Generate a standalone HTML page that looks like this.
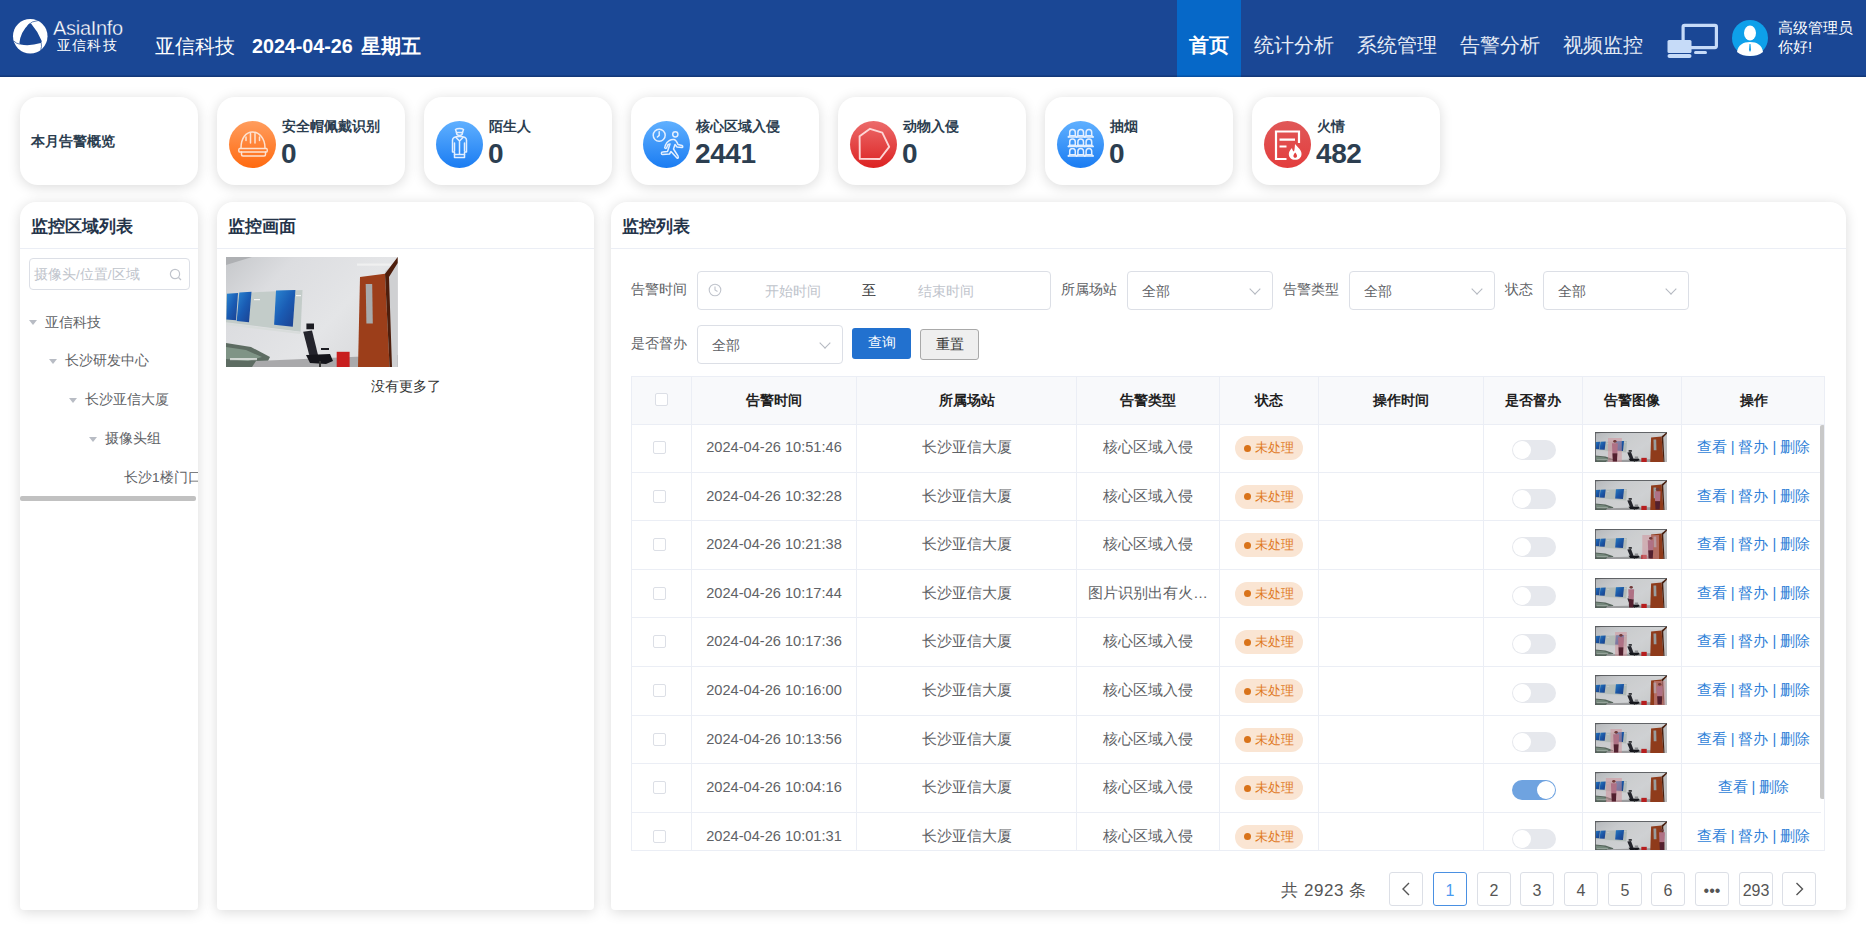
<!DOCTYPE html>
<html><head><meta charset="utf-8">
<style>
*{margin:0;padding:0;box-sizing:border-box;}
html,body{width:1866px;height:930px;overflow:hidden;background:#fff;font-family:"Liberation Sans",sans-serif;}
.abs{position:absolute;}
#hdr{position:absolute;left:0;top:0;width:1866px;height:77px;background:#1a4795;color:#fff;box-shadow:inset 0 -1.5px 0 rgba(10,30,70,0.35);}
.nav{position:absolute;top:0;height:77px;line-height:90px;font-size:20px;color:#e6ecf5;white-space:nowrap;}
.card{position:absolute;background:#fff;border-radius:18px;box-shadow:0 2px 13px rgba(0,0,0,0.15);}
.stat{top:97px;height:88px;width:188px;}
.stat .ic{position:absolute;left:12px;top:24px;width:47px;height:47px;border-radius:50%;}
.stat .ic svg{position:absolute;left:0;top:0;}
.stat .t{position:absolute;left:65px;top:21px;font-size:13.7px;font-weight:bold;color:#2c3e50;white-space:nowrap;}
.stat .n{position:absolute;left:64px;top:41px;font-size:28px;letter-spacing:-0.4px;font-weight:bold;color:#2c3e50;}
.panel{top:202px;height:708px;border-radius:16px 16px 4px 4px;}
.ptitle{position:absolute;left:11px;top:13px;font-size:17px;font-weight:bold;color:#25344a;white-space:nowrap;}
.pline{position:absolute;left:0;right:0;top:46px;height:1px;background:#ebeef5;}
.lbl{position:absolute;font-size:13.7px;color:#606266;white-space:nowrap;}
.inp{position:absolute;border:1px solid #dcdfe6;border-radius:4px;background:#fff;height:38.5px;}
.sel{width:146px;}
.sel .v{position:absolute;left:14px;top:11px;font-size:14px;color:#606266;}
.sel .arr{position:absolute;right:13px;top:13px;width:8px;height:8px;border-right:1px solid #b4b8c0;border-bottom:1px solid #b4b8c0;transform:rotate(45deg);}
.tree{position:absolute;font-size:13.7px;color:#606266;white-space:nowrap;}
.tri{position:absolute;width:0;height:0;border-left:4px solid transparent;border-right:4px solid transparent;border-top:5px solid #b8bcc4;}
#tbl{position:absolute;left:631px;top:376px;width:1194px;height:475px;border:1px solid #ebeef5;overflow:hidden;}
.th{position:absolute;top:0;height:48px;line-height:46px;text-align:center;font-size:14px;font-weight:bold;color:#1f1f1f;background:#f8f9fb;border-right:1px solid #ebeef5;border-bottom:1px solid #ebeef5;}
.row{position:absolute;left:0;width:1189px;height:48.6px;border-bottom:1px solid #ebeef5;}
.td{position:absolute;top:0;height:100%;text-align:center;font-size:14.6px;color:#606266;border-right:1px solid #ebeef5;line-height:47px;white-space:nowrap;}
.cb{position:absolute;width:13px;height:13px;border:1px solid #dcdfe6;border-radius:2px;background:#fff;}
.tag{position:absolute;left:15px;top:12px;width:68px;height:24px;border-radius:12px;background:#fae5d3;color:#e07a1f;font-size:13px;line-height:24px;text-align:left;padding-left:20px;}
.tag:before{content:"";position:absolute;left:9px;top:8.5px;width:7px;height:7px;border-radius:50%;background:#d9731a;}
.sw{position:absolute;left:28px;top:16px;width:44px;height:20px;border-radius:10px;background:#e6e8ed;}
.sw:after{content:"";position:absolute;left:1px;top:1px;width:18px;height:18px;border-radius:50%;background:#fff;}
.sw.on{background:#6fa3e0;}
.sw.on:after{left:25px;}
.th img,.td .im{position:absolute;}
.im{left:12px;top:7.8px;width:72px;height:30px;}
.ops{color:#2f7fd8;font-size:14.6px;}
.pg{position:absolute;top:872px;width:34px;height:34px;border:1px solid #dcdfe6;border-radius:3px;background:#fff;text-align:center;line-height:35px;font-size:16px;color:#555;}
</style></head>
<body>
<svg width="0" height="0" style="position:absolute">
<defs>
<linearGradient id="wallg" x1="0" y1="0" x2="1" y2="0.6"><stop offset="0" stop-color="#c6c8cb"/><stop offset="0.3" stop-color="#dcdde0"/><stop offset="0.7" stop-color="#e4e5e7"/><stop offset="1" stop-color="#dadbdd"/></linearGradient>
<linearGradient id="postg" x1="0" y1="0" x2="1" y2="1"><stop offset="0" stop-color="#2a86d2"/><stop offset="0.5" stop-color="#1a5cb4"/><stop offset="1" stop-color="#1b3f8f"/></linearGradient>
<g id="camg">
<rect width="172" height="110" fill="url(#wallg)"/>
<polygon points="0,0 26,0 0,8" fill="#aeb0b3"/>
<polygon points="0,36.8 76.5,32.9 74.6,74.8 0,65.2" fill="#c3ccc9"/>
<polygon points="0,66 74.6,75 74,77 0,68" fill="#d8dcdb"/>
<polygon points="1,36.8 12,36.1 10,63.2 0.4,62.6" fill="url(#postg)"/>
<polygon points="13.3,35.5 25.5,34.8 23,65.2 10.7,63.9" fill="url(#postg)"/>
<polygon points="50,33.5 69.4,32.9 66.8,69.7 48.1,67.7" fill="url(#postg)"/>
<rect x="28" y="42" width="6" height="1.2" fill="#f4f4f4"/><rect x="70" y="38" width="5" height="1.2" fill="#f4f4f4"/>
<polygon points="0,86 25,90 44,100 42,104 30,110 0,110" fill="#5d6c62"/>
<polygon points="0,90 20,93 36,100 22,104 0,102" fill="#7f9486"/>
<polygon points="30,104 172,98 172,110 26,110" fill="#a9a9ab"/>
<polygon points="80.4,66.5 88,66.5 88,72.3 80.4,72.3" fill="#1c1c22"/>
<polygon points="77.2,74.8 86,73.5 92,98 84,101" fill="#24242c"/>
<polygon points="80,98 104,97 107,104 100,107 84,106" fill="#15151b"/>
<rect x="95" y="91" width="8" height="2" fill="#1c1c22"/><rect x="93" y="104" width="2" height="6" fill="#333"/>
<rect x="110.7" y="94.8" width="12.9" height="15.5" fill="#c81e1e"/>
<polygon points="159,14.2 171.7,4 171.7,110.3 163.6,110.3" fill="#cfd0d2"/>
<polygon points="134,20 159,16.8 163.6,110.3 132,110.3" fill="#9c3e1a"/>
<polygon points="139.7,27.1 146.2,27.1 146.8,66.5 140.4,66.5" fill="#a8aaab"/>
<polygon points="159,16.8 171.7,0 171.7,6 163,20 166,110.3 163.6,110.3" fill="#4e1e0c"/>
<rect x="131" y="6.5" width="34" height="2.2" fill="#f2f2f2" opacity="0.8"/>
<rect x="4" y="101" width="27" height="2.2" fill="#f2f2f2" opacity="0.7"/>
</g></defs></svg><div id="hdr">
  <svg class="abs" style="left:12px;top:18px" width="36" height="36" viewBox="0 0 36 36">
    <circle cx="18.25" cy="18.2" r="17.25" fill="#fff"/>
    <path d="M17.2,5.8 Q18.2,5 19.2,5.8 Q25.5,13 29.6,22.8 Q30.2,24.6 28.8,25 Q18.5,28.2 8.6,26.6 Q7.4,26.3 7.4,25 Q8.5,14 17.2,5.8 Z" fill="#1a4795"/>
    <path d="M15.5,7.5 Q20,2.8 26,2.6 M7.8,26.2 Q4,25.5 1.8,23 M29.2,24.8 Q30,28.5 28.8,31.8" fill="none" stroke="#1a4795" stroke-width="0.7"/>
  </svg>
  <div class="abs" style="left:53px;top:17px;font-size:20px;color:#fff;letter-spacing:-0.3px;-webkit-text-stroke:0.35px #1a4795">AsiaInfo</div>
  <div class="abs" style="left:57px;top:37px;font-size:14px;color:#fff;letter-spacing:1.2px;">亚信科技</div>
  <div class="abs" style="left:155px;top:33px;font-size:20px;color:#fff;">亚信科技</div>
  <div class="abs" style="left:252px;top:35px;font-size:19.7px;font-weight:bold;color:#fff;white-space:nowrap">2024-04-26</div><div class="abs" style="left:361px;top:33px;font-size:19.5px;font-weight:bold;color:#fff;white-space:nowrap">星期五</div>
  <div class="abs" style="left:1177px;top:0;width:64px;height:77px;background:#0668c8;box-shadow:inset 0 -1.5px 0 rgba(10,40,100,0.35);"></div>
  <div class="nav" style="left:1189px;font-weight:bold;color:#fff">首页</div>
  <div class="nav" style="left:1254px">统计分析</div>
  <div class="nav" style="left:1357px">系统管理</div>
  <div class="nav" style="left:1460px">告警分析</div>
  <div class="nav" style="left:1563px">视频监控</div>
  <svg class="abs" style="left:1666px;top:20px" width="56" height="42" viewBox="0 0 56 42">
    <rect x="17.1" y="5.4" width="33.3" height="22.2" rx="1.5" fill="none" stroke="#c6dbf8" stroke-width="3.2"/>
    <rect x="28" y="31" width="13" height="3" rx="1.5" fill="#c6dbf8"/>
    <rect x="1.5" y="20" width="24" height="13" rx="1.5" fill="#c6dbf8" stroke="#1a4795" stroke-width="0"/>
    <rect x="1.5" y="34" width="24" height="4" rx="2" fill="#c6dbf8"/>
  </svg>
  <svg class="abs" style="left:1731px;top:19px" width="38" height="38" viewBox="0 0 38 38">
    <circle cx="19" cy="19" r="18" fill="#0ea0ea"/>
    <ellipse cx="19" cy="14" rx="6" ry="7.5" fill="#fff"/>
    <path d="M6,33 C7,26 12,23 19,23 C26,23 31,26 32,33 C28,36 24,37 19,37 C14,37 10,36 6,33Z" fill="#fff"/>
    <path d="M18.5,25 L19.5,25 L20,31 L19,33 L18,31Z" fill="#0ea0ea"/>
  </svg>
  <div class="abs" style="left:1778px;top:18px;font-size:15px;line-height:19px;color:#fff;white-space:nowrap">高级管理员<br>你好!</div>
</div>
<div class="card stat" style="left:20px;width:178px"><div class="abs" style="left:11px;top:36px;font-size:14px;font-weight:bold;color:#2c3e50">本月告警概览</div></div>
<div class="card stat" style="left:217px"><div class="ic" style="background:linear-gradient(#ff9d5e,#ff6a10)"><svg width="47" height="47" viewBox="0 0 47 47"><path d="M12,27 C12,17 17,11 23.5,11 C30,11 36,17 36,27" stroke="#fde3d2" fill="none" stroke-width="1.5" stroke-linejoin="round" stroke-linecap="round"/><path d="M10.5,27.5 L37.5,27.5 C38.5,27.5 38.5,31 37.5,31 L10.5,31 C9.5,31 9.5,27.5 10.5,27.5 Z" stroke="#fde3d2" fill="none" stroke-width="1.5" stroke-linejoin="round" stroke-linecap="round"/><path d="M12.5,31 L12.5,33.5 C12.5,34.5 13,35 14,35 L35,35 C36,35 36.5,34.5 36.5,33.5 L36.5,31" stroke="#fde3d2" fill="none" stroke-width="1.5" stroke-linejoin="round" stroke-linecap="round"/><path d="M21.5,12.5 L21.5,22 M26,12.5 L26,22 M17,16 L17,19.5 M30.5,16 L30.5,19.5" stroke="#fde3d2" fill="none" stroke-width="1.5" stroke-linejoin="round" stroke-linecap="round"/></svg></div><div class="t">安全帽佩戴识别</div><div class="n">0</div></div>
<div class="card stat" style="left:424px"><div class="ic" style="background:linear-gradient(#60b0ff,#1a7cf2)"><svg width="47" height="47" viewBox="0 0 47 47"><path d="M19.5,8.5 C21,7 26,7 27.5,8.5 L26.5,11.5 L20.5,11.5 Z" stroke="#e3efff" fill="none" stroke-width="1.5" stroke-linejoin="round" stroke-linecap="round"/><path d="M20.5,11.5 C20.5,15.5 26.5,15.5 26.5,11.5" stroke="#e3efff" fill="none" stroke-width="1.5" stroke-linejoin="round" stroke-linecap="round"/><path d="M16.5,31 L16.5,19 C16.5,16.5 19,15.5 23.5,15.5 C28,15.5 30.5,16.5 30.5,19 L30.5,31 L28.5,31 L28.5,36.5 L18.5,36.5 L18.5,31 Z" stroke="#e3efff" fill="none" stroke-width="1.5" stroke-linejoin="round" stroke-linecap="round"/><path d="M20,16.5 L23.5,20 L27,16.5 M23.5,20 L23.5,33 M18.5,22 L18.5,30 M28.5,22 L28.5,30 M18.5,33.5 L28.5,33.5" stroke="#e3efff" fill="none" stroke-width="1.5" stroke-linejoin="round" stroke-linecap="round"/></svg></div><div class="t">陌生人</div><div class="n">0</div></div>
<div class="card stat" style="left:631px"><div class="ic" style="background:linear-gradient(#60b0ff,#1a7cf2)"><svg width="47" height="47" viewBox="0 0 47 47"><circle cx="16.2" cy="14.2" r="6" stroke="#e3efff" fill="none" stroke-width="1.5" stroke-linejoin="round" stroke-linecap="round"/><path d="M16.2,10.8 L16.2,14.4 L14.4,16" stroke="#e3efff" fill="none" stroke-width="1.5" stroke-linejoin="round" stroke-linecap="round"/><circle cx="32.3" cy="13.3" r="2.6" stroke="#e3efff" fill="none" stroke-width="1.5" stroke-linejoin="round" stroke-linecap="round"/><path d="M22.5,24 C24,20 28,18 31,18.5 C33,19 34,21 35,23.5 L39,24.5 C40,25 40,26.5 39,26.5 L34,26 L32,23.5 L30.5,28 L35,35 C36,37 34.5,38 33.5,36.5 L28,30.5 L26.5,33 L19.5,33.5 C18,33.5 18,31 19.5,31 L24.5,30.5 L27,23 L25,23.5 L23.5,27 C22.5,28 21,27 22,25.5 Z" stroke="#e3efff" fill="none" stroke-width="1.5" stroke-linejoin="round" stroke-linecap="round"/></svg></div><div class="t">核心区域入侵</div><div class="n">2441</div></div>
<div class="card stat" style="left:838px"><div class="ic" style="background:linear-gradient(#ec6b6b,#dc2222)"><svg width="47" height="47" viewBox="0 0 47 47"><polygon points="9.6,15.3 20,7.8 32.3,11.7 39.2,25.8 29.9,38 9.8,37.9" fill="none" stroke="#fdd6d6" stroke-width="1.9" stroke-linejoin="round"/></svg></div><div class="t">动物入侵</div><div class="n">0</div></div>
<div class="card stat" style="left:1045px"><div class="ic" style="background:linear-gradient(#60b0ff,#1a7cf2)"><svg width="47" height="47" viewBox="0 0 47 47"><path d="M15.5,8.5 c-2.2,0 -2.8,1.6 -2.8,3 l0,3.2 l5.6,0 l0,-3.2 c0,-1.4 -0.6,-3 -2.8,-3 Z" stroke="#e3efff" fill="none" stroke-width="1.5" stroke-linejoin="round" stroke-linecap="round"/><path d="M12.7,14.7 l-1.4,1.2 M18.3,14.7 l1.4,1.2" stroke="#e3efff" fill="none" stroke-width="1.5" stroke-linejoin="round" stroke-linecap="round"/><path d="M23.7,8.5 c-2.2,0 -2.8,1.6 -2.8,3 l0,3.2 l5.6,0 l0,-3.2 c0,-1.4 -0.6,-3 -2.8,-3 Z" stroke="#e3efff" fill="none" stroke-width="1.5" stroke-linejoin="round" stroke-linecap="round"/><path d="M20.9,14.7 l-1.4,1.2 M26.5,14.7 l1.4,1.2" stroke="#e3efff" fill="none" stroke-width="1.5" stroke-linejoin="round" stroke-linecap="round"/><path d="M31.9,8.5 c-2.2,0 -2.8,1.6 -2.8,3 l0,3.2 l5.6,0 l0,-3.2 c0,-1.4 -0.6,-3 -2.8,-3 Z" stroke="#e3efff" fill="none" stroke-width="1.5" stroke-linejoin="round" stroke-linecap="round"/><path d="M29.1,14.7 l-1.4,1.2 M34.7,14.7 l1.4,1.2" stroke="#e3efff" fill="none" stroke-width="1.5" stroke-linejoin="round" stroke-linecap="round"/><path d="M11.5,15.9 L36,15.9" stroke="#e3efff" fill="none" stroke-width="1.5" stroke-linejoin="round" stroke-linecap="round"/><path d="M15.5,18 c-2.2,0 -2.8,1.6 -2.8,3 l0,3.2 l5.6,0 l0,-3.2 c0,-1.4 -0.6,-3 -2.8,-3 Z" stroke="#e3efff" fill="none" stroke-width="1.5" stroke-linejoin="round" stroke-linecap="round"/><path d="M12.7,24.2 l-1.4,1.2 M18.3,24.2 l1.4,1.2" stroke="#e3efff" fill="none" stroke-width="1.5" stroke-linejoin="round" stroke-linecap="round"/><path d="M23.7,18 c-2.2,0 -2.8,1.6 -2.8,3 l0,3.2 l5.6,0 l0,-3.2 c0,-1.4 -0.6,-3 -2.8,-3 Z" stroke="#e3efff" fill="none" stroke-width="1.5" stroke-linejoin="round" stroke-linecap="round"/><path d="M20.9,24.2 l-1.4,1.2 M26.5,24.2 l1.4,1.2" stroke="#e3efff" fill="none" stroke-width="1.5" stroke-linejoin="round" stroke-linecap="round"/><path d="M31.9,18 c-2.2,0 -2.8,1.6 -2.8,3 l0,3.2 l5.6,0 l0,-3.2 c0,-1.4 -0.6,-3 -2.8,-3 Z" stroke="#e3efff" fill="none" stroke-width="1.5" stroke-linejoin="round" stroke-linecap="round"/><path d="M29.1,24.2 l-1.4,1.2 M34.7,24.2 l1.4,1.2" stroke="#e3efff" fill="none" stroke-width="1.5" stroke-linejoin="round" stroke-linecap="round"/><path d="M11.5,25.4 L36,25.4" stroke="#e3efff" fill="none" stroke-width="1.5" stroke-linejoin="round" stroke-linecap="round"/><path d="M15.5,27.5 c-2.2,0 -2.8,1.6 -2.8,3 l0,3.2 l5.6,0 l0,-3.2 c0,-1.4 -0.6,-3 -2.8,-3 Z" stroke="#e3efff" fill="none" stroke-width="1.5" stroke-linejoin="round" stroke-linecap="round"/><path d="M12.7,33.7 l-1.4,1.2 M18.3,33.7 l1.4,1.2" stroke="#e3efff" fill="none" stroke-width="1.5" stroke-linejoin="round" stroke-linecap="round"/><path d="M23.7,27.5 c-2.2,0 -2.8,1.6 -2.8,3 l0,3.2 l5.6,0 l0,-3.2 c0,-1.4 -0.6,-3 -2.8,-3 Z" stroke="#e3efff" fill="none" stroke-width="1.5" stroke-linejoin="round" stroke-linecap="round"/><path d="M20.9,33.7 l-1.4,1.2 M26.5,33.7 l1.4,1.2" stroke="#e3efff" fill="none" stroke-width="1.5" stroke-linejoin="round" stroke-linecap="round"/><path d="M31.9,27.5 c-2.2,0 -2.8,1.6 -2.8,3 l0,3.2 l5.6,0 l0,-3.2 c0,-1.4 -0.6,-3 -2.8,-3 Z" stroke="#e3efff" fill="none" stroke-width="1.5" stroke-linejoin="round" stroke-linecap="round"/><path d="M29.1,33.7 l-1.4,1.2 M34.7,33.7 l1.4,1.2" stroke="#e3efff" fill="none" stroke-width="1.5" stroke-linejoin="round" stroke-linecap="round"/><path d="M11.5,34.9 L36,34.9" stroke="#e3efff" fill="none" stroke-width="1.5" stroke-linejoin="round" stroke-linecap="round"/></svg></div><div class="t">抽烟</div><div class="n">0</div></div>
<div class="card stat" style="left:1252px"><div class="ic" style="background:linear-gradient(#e05858,#e33d3d)"><svg width="47" height="47" viewBox="0 0 47 47"><path d="M35,22 L35,10.5 L12,10.5 L12,38 L22.5,38" fill="none" stroke="#fff" stroke-width="2.2"/><path d="M15.5,18.7 L31,18.7 M15.5,25.5 L22.5,25.5" stroke="#fff" stroke-width="2.2"/><path d="M31,23 C34,26.5 37.5,29 37.5,33 C37.5,36.5 35,38.8 31.2,38.8 C27.4,38.8 24.8,36.5 24.8,33 C24.8,30.5 26.5,28.5 28,27 C28.3,29 28.8,30 30,30.5 C30.8,28 30.8,25.5 31,23 Z" fill="#fff"/><path d="M31.2,31.5 C32.5,33 33,34 33,35 C33,36.2 32.2,36.8 31.2,36.8 C30.2,36.8 29.4,36.2 29.4,35 C29.4,34 30,33 31.2,31.5 Z" fill="#e04040"/></svg></div><div class="t">火情</div><div class="n">482</div></div>
<div class="card panel" style="left:20px;width:178px;overflow:hidden">
  <div class="ptitle">监控区域列表</div><div class="pline"></div>
  <div class="inp" style="left:9px;top:56px;width:161px;height:32px;"><div class="abs" style="left:4px;top:7px;font-size:13.5px;color:#c0c4cc;white-space:nowrap">摄像头/位置/区域</div>
    <svg class="abs" style="left:139px;top:9px" width="14" height="14" viewBox="0 0 14 14"><circle cx="6" cy="6" r="4.6" fill="none" stroke="#c0c4cc" stroke-width="1.2"/><path d="M9.5,9.5 L12,12" stroke="#c0c4cc" stroke-width="1.2"/></svg></div>
  <div class="tri" style="left:9px;top:118px"></div><div class="tree" style="left:25px;top:112px">亚信科技</div>
  <div class="tri" style="left:29px;top:157px"></div><div class="tree" style="left:45px;top:150px">长沙研发中心</div>
  <div class="tri" style="left:49px;top:196px"></div><div class="tree" style="left:65px;top:189px">长沙亚信大厦</div>
  <div class="tri" style="left:69px;top:235px"></div><div class="tree" style="left:85px;top:228px">摄像头组</div>
  <div class="tree" style="left:104px;top:267px">长沙1楼门口</div>
  <div class="abs" style="left:0;top:294px;width:176px;height:5px;background:#c1c1c1;border-radius:2px"></div>
</div>
<div class="card panel" style="left:217px;width:377px">
  <div class="ptitle">监控画面</div><div class="pline"></div>
  <div class="abs" style="left:9px;top:55px;width:172px;height:110px"><svg viewBox="0 0 172 110" preserveAspectRatio="none" width="100%" height="100%" style="display:block"><use href="#camg"/></svg></div>
  <div class="abs" style="left:154px;top:176px;font-size:14px;color:#333;white-space:nowrap">没有更多了</div>
</div>
<div class="card panel" style="left:611px;width:1235px">
  <div class="ptitle">监控列表</div><div class="pline"></div>
</div>
<div class="lbl" style="left:631px;top:281px">告警时间</div>
<div class="inp" style="left:697px;top:271px;width:354px;">
  <svg class="abs" style="left:10px;top:11px" width="14" height="14" viewBox="0 0 14 14"><circle cx="7" cy="7" r="5.8" fill="none" stroke="#c0c4cc" stroke-width="1.1"/><path d="M7,3.5 L7,7 L9.5,8.5" fill="none" stroke="#c0c4cc" stroke-width="1.1"/></svg>
  <div class="abs" style="left:67px;top:10.5px;font-size:13.5px;color:#c0c4cc">开始时间</div>
  <div class="abs" style="left:164px;top:10px;font-size:14px;color:#303133">至</div>
  <div class="abs" style="left:220px;top:10.5px;font-size:13.5px;color:#c0c4cc">结束时间</div>
</div>
<div class="lbl" style="left:1061px;top:281px">所属场站</div>
<div class="inp sel" style="left:1127px;top:271px"><div class="v">全部</div><div class="arr"></div></div>
<div class="lbl" style="left:1283px;top:281px">告警类型</div>
<div class="inp sel" style="left:1349px;top:271px"><div class="v">全部</div><div class="arr"></div></div>
<div class="lbl" style="left:1505px;top:281px">状态</div>
<div class="inp sel" style="left:1543px;top:271px"><div class="v">全部</div><div class="arr"></div></div>
<div class="lbl" style="left:631px;top:335px">是否督办</div>
<div class="inp sel" style="left:697px;top:325px"><div class="v">全部</div><div class="arr"></div></div>
<div class="abs" style="left:852px;top:328px;width:59px;height:31px;background:#2271cf;border-radius:3px;color:#fff;font-size:14px;text-align:center;line-height:29px">查询</div>
<div class="abs" style="left:920px;top:329px;width:59px;height:31px;background:#efefef;border:1px solid #a9a9a9;border-radius:3px;color:#333;font-size:14px;text-align:center;line-height:29px">重置</div>
<div id="tbl">
<div class="th" style="left:0px;width:60px;"><div class="cb" style="left:23px;top:16px"></div></div><div class="th" style="left:60px;width:165px;">告警时间</div><div class="th" style="left:225px;width:220px;">所属场站</div><div class="th" style="left:445px;width:143px;">告警类型</div><div class="th" style="left:588px;width:99px;">状态</div><div class="th" style="left:687px;width:165px;">操作时间</div><div class="th" style="left:852px;width:99px;">是否督办</div><div class="th" style="left:951px;width:99px;">告警图像</div><div class="th" style="left:1050px;width:144px;border-right:none;">操作</div>
<div class="row" style="top:47.00px"><div class="td" style="left:0px;width:60px;"><div class="cb" style="left:21px;top:17px"></div></div><div class="td" style="left:60px;width:165px;">2024-04-26 10:51:46</div><div class="td" style="left:225px;width:220px;">长沙亚信大厦</div><div class="td" style="left:445px;width:143px;">核心区域入侵</div><div class="td" style="left:588px;width:99px;"><div class="tag">未处理</div></div><div class="td" style="left:687px;width:165px;"></div><div class="td" style="left:852px;width:99px;"><div class="sw"></div></div><div class="td" style="left:951px;width:99px;"><div class="abs im"><svg viewBox="0 0 172 110" preserveAspectRatio="none" width="100%" height="100%" style="display:block"><use href="#camg"/><rect x="31" y="22" width="33" height="88" fill="#e6a0aa" opacity="0.55"/><ellipse cx="47.5" cy="34" rx="4" ry="5" fill="#7a3a3a"/><polygon points="40.5,41 54.5,41 53.5,78 41.5,78" fill="#c07a90"/><polygon points="41.5,78 53.5,78 52.5,108 42.5,108" fill="#5a2030"/><rect width="172" height="110" fill="#202428" opacity="0.1"/><rect width="172" height="3" fill="#4a4c50"/><rect width="2" height="110" fill="#5a5c60"/></svg></div></div><div class="td" style="left:1050px;width:139px;border-right:none;"><span class="ops" style="padding-left:4px">查看 | 督办 | 删除</span></div></div>
<div class="row" style="top:95.60px"><div class="td" style="left:0px;width:60px;"><div class="cb" style="left:21px;top:17px"></div></div><div class="td" style="left:60px;width:165px;">2024-04-26 10:32:28</div><div class="td" style="left:225px;width:220px;">长沙亚信大厦</div><div class="td" style="left:445px;width:143px;">核心区域入侵</div><div class="td" style="left:588px;width:99px;"><div class="tag">未处理</div></div><div class="td" style="left:687px;width:165px;"></div><div class="td" style="left:852px;width:99px;"><div class="sw"></div></div><div class="td" style="left:951px;width:99px;"><div class="abs im"><svg viewBox="0 0 172 110" preserveAspectRatio="none" width="100%" height="100%" style="display:block"><use href="#camg"/><ellipse cx="149.5" cy="34" rx="4" ry="5" fill="#7a3a3a"/><polygon points="142.5,41 156.5,41 155.5,78 143.5,78" fill="#c07a90"/><polygon points="143.5,78 155.5,78 154.5,108 144.5,108" fill="#5a2030"/><rect width="172" height="110" fill="#202428" opacity="0.1"/><rect width="172" height="3" fill="#4a4c50"/><rect width="2" height="110" fill="#5a5c60"/></svg></div></div><div class="td" style="left:1050px;width:139px;border-right:none;"><span class="ops" style="padding-left:4px">查看 | 督办 | 删除</span></div></div>
<div class="row" style="top:144.20px"><div class="td" style="left:0px;width:60px;"><div class="cb" style="left:21px;top:17px"></div></div><div class="td" style="left:60px;width:165px;">2024-04-26 10:21:38</div><div class="td" style="left:225px;width:220px;">长沙亚信大厦</div><div class="td" style="left:445px;width:143px;">核心区域入侵</div><div class="td" style="left:588px;width:99px;"><div class="tag">未处理</div></div><div class="td" style="left:687px;width:165px;"></div><div class="td" style="left:852px;width:99px;"><div class="sw"></div></div><div class="td" style="left:951px;width:99px;"><div class="abs im"><svg viewBox="0 0 172 110" preserveAspectRatio="none" width="100%" height="100%" style="display:block"><use href="#camg"/><rect x="113" y="22" width="40" height="88" fill="#e6a0aa" opacity="0.55"/><ellipse cx="133.0" cy="34" rx="4" ry="5" fill="#7a3a3a"/><polygon points="126.0,41 140.0,41 139.0,78 127.0,78" fill="#c07a90"/><polygon points="127.0,78 139.0,78 138.0,108 128.0,108" fill="#5a2030"/><rect width="172" height="110" fill="#202428" opacity="0.1"/><rect width="172" height="3" fill="#4a4c50"/><rect width="2" height="110" fill="#5a5c60"/></svg></div></div><div class="td" style="left:1050px;width:139px;border-right:none;"><span class="ops" style="padding-left:4px">查看 | 督办 | 删除</span></div></div>
<div class="row" style="top:192.80px"><div class="td" style="left:0px;width:60px;"><div class="cb" style="left:21px;top:17px"></div></div><div class="td" style="left:60px;width:165px;">2024-04-26 10:17:44</div><div class="td" style="left:225px;width:220px;">长沙亚信大厦</div><div class="td" style="left:445px;width:143px;">图片识别出有火…</div><div class="td" style="left:588px;width:99px;"><div class="tag">未处理</div></div><div class="td" style="left:687px;width:165px;"></div><div class="td" style="left:852px;width:99px;"><div class="sw"></div></div><div class="td" style="left:951px;width:99px;"><div class="abs im"><svg viewBox="0 0 172 110" preserveAspectRatio="none" width="100%" height="100%" style="display:block"><use href="#camg"/><ellipse cx="86.5" cy="34" rx="4" ry="5" fill="#7a3a3a"/><polygon points="79.5,41 93.5,41 92.5,78 80.5,78" fill="#c07a90"/><polygon points="80.5,78 92.5,78 91.5,108 81.5,108" fill="#5a2030"/><rect width="172" height="110" fill="#202428" opacity="0.1"/><rect width="172" height="3" fill="#4a4c50"/><rect width="2" height="110" fill="#5a5c60"/></svg></div></div><div class="td" style="left:1050px;width:139px;border-right:none;"><span class="ops" style="padding-left:4px">查看 | 督办 | 删除</span></div></div>
<div class="row" style="top:241.40px"><div class="td" style="left:0px;width:60px;"><div class="cb" style="left:21px;top:17px"></div></div><div class="td" style="left:60px;width:165px;">2024-04-26 10:17:36</div><div class="td" style="left:225px;width:220px;">长沙亚信大厦</div><div class="td" style="left:445px;width:143px;">核心区域入侵</div><div class="td" style="left:588px;width:99px;"><div class="tag">未处理</div></div><div class="td" style="left:687px;width:165px;"></div><div class="td" style="left:852px;width:99px;"><div class="sw"></div></div><div class="td" style="left:951px;width:99px;"><div class="abs im"><svg viewBox="0 0 172 110" preserveAspectRatio="none" width="100%" height="100%" style="display:block"><use href="#camg"/><rect x="48" y="22" width="28" height="88" fill="#e6a0aa" opacity="0.55"/><ellipse cx="62.0" cy="34" rx="4" ry="5" fill="#7a3a3a"/><polygon points="55.0,41 69.0,41 68.0,78 56.0,78" fill="#c07a90"/><polygon points="56.0,78 68.0,78 67.0,108 57.0,108" fill="#5a2030"/><rect width="172" height="110" fill="#202428" opacity="0.1"/><rect width="172" height="3" fill="#4a4c50"/><rect width="2" height="110" fill="#5a5c60"/></svg></div></div><div class="td" style="left:1050px;width:139px;border-right:none;"><span class="ops" style="padding-left:4px">查看 | 督办 | 删除</span></div></div>
<div class="row" style="top:290.00px"><div class="td" style="left:0px;width:60px;"><div class="cb" style="left:21px;top:17px"></div></div><div class="td" style="left:60px;width:165px;">2024-04-26 10:16:00</div><div class="td" style="left:225px;width:220px;">长沙亚信大厦</div><div class="td" style="left:445px;width:143px;">核心区域入侵</div><div class="td" style="left:588px;width:99px;"><div class="tag">未处理</div></div><div class="td" style="left:687px;width:165px;"></div><div class="td" style="left:852px;width:99px;"><div class="sw"></div></div><div class="td" style="left:951px;width:99px;"><div class="abs im"><svg viewBox="0 0 172 110" preserveAspectRatio="none" width="100%" height="100%" style="display:block"><use href="#camg"/><rect x="141" y="22" width="27" height="88" fill="#e6a0aa" opacity="0.55"/><ellipse cx="154.5" cy="34" rx="4" ry="5" fill="#7a3a3a"/><polygon points="147.5,41 161.5,41 160.5,78 148.5,78" fill="#c07a90"/><polygon points="148.5,78 160.5,78 159.5,108 149.5,108" fill="#5a2030"/><rect width="172" height="110" fill="#202428" opacity="0.1"/><rect width="172" height="3" fill="#4a4c50"/><rect width="2" height="110" fill="#5a5c60"/></svg></div></div><div class="td" style="left:1050px;width:139px;border-right:none;"><span class="ops" style="padding-left:4px">查看 | 督办 | 删除</span></div></div>
<div class="row" style="top:338.60px"><div class="td" style="left:0px;width:60px;"><div class="cb" style="left:21px;top:17px"></div></div><div class="td" style="left:60px;width:165px;">2024-04-26 10:13:56</div><div class="td" style="left:225px;width:220px;">长沙亚信大厦</div><div class="td" style="left:445px;width:143px;">核心区域入侵</div><div class="td" style="left:588px;width:99px;"><div class="tag">未处理</div></div><div class="td" style="left:687px;width:165px;"></div><div class="td" style="left:852px;width:99px;"><div class="sw"></div></div><div class="td" style="left:951px;width:99px;"><div class="abs im"><svg viewBox="0 0 172 110" preserveAspectRatio="none" width="100%" height="100%" style="display:block"><use href="#camg"/><rect x="37" y="22" width="27" height="88" fill="#e6a0aa" opacity="0.55"/><ellipse cx="50.5" cy="34" rx="4" ry="5" fill="#7a3a3a"/><polygon points="43.5,41 57.5,41 56.5,78 44.5,78" fill="#c07a90"/><polygon points="44.5,78 56.5,78 55.5,108 45.5,108" fill="#5a2030"/><rect width="172" height="110" fill="#202428" opacity="0.1"/><rect width="172" height="3" fill="#4a4c50"/><rect width="2" height="110" fill="#5a5c60"/></svg></div></div><div class="td" style="left:1050px;width:139px;border-right:none;"><span class="ops" style="padding-left:4px">查看 | 督办 | 删除</span></div></div>
<div class="row" style="top:387.20px"><div class="td" style="left:0px;width:60px;"><div class="cb" style="left:21px;top:17px"></div></div><div class="td" style="left:60px;width:165px;">2024-04-26 10:04:16</div><div class="td" style="left:225px;width:220px;">长沙亚信大厦</div><div class="td" style="left:445px;width:143px;">核心区域入侵</div><div class="td" style="left:588px;width:99px;"><div class="tag">未处理</div></div><div class="td" style="left:687px;width:165px;"></div><div class="td" style="left:852px;width:99px;"><div class="sw on"></div></div><div class="td" style="left:951px;width:99px;"><div class="abs im"><svg viewBox="0 0 172 110" preserveAspectRatio="none" width="100%" height="100%" style="display:block"><use href="#camg"/><rect x="26" y="22" width="38" height="88" fill="#e6a0aa" opacity="0.55"/><ellipse cx="45.0" cy="34" rx="4" ry="5" fill="#7a3a3a"/><polygon points="38.0,41 52.0,41 51.0,78 39.0,78" fill="#c07a90"/><polygon points="39.0,78 51.0,78 50.0,108 40.0,108" fill="#5a2030"/><rect width="172" height="110" fill="#202428" opacity="0.1"/><rect width="172" height="3" fill="#4a4c50"/><rect width="2" height="110" fill="#5a5c60"/></svg></div></div><div class="td" style="left:1050px;width:139px;border-right:none;"><span class="ops" style="padding-left:4px">查看 | 删除</span></div></div>
<div class="row" style="top:435.80px"><div class="td" style="left:0px;width:60px;"><div class="cb" style="left:21px;top:17px"></div></div><div class="td" style="left:60px;width:165px;">2024-04-26 10:01:31</div><div class="td" style="left:225px;width:220px;">长沙亚信大厦</div><div class="td" style="left:445px;width:143px;">核心区域入侵</div><div class="td" style="left:588px;width:99px;"><div class="tag">未处理</div></div><div class="td" style="left:687px;width:165px;"></div><div class="td" style="left:852px;width:99px;"><div class="sw"></div></div><div class="td" style="left:951px;width:99px;"><div class="abs im"><svg viewBox="0 0 172 110" preserveAspectRatio="none" width="100%" height="100%" style="display:block"><use href="#camg"/><ellipse cx="160.0" cy="34" rx="4" ry="5" fill="#7a3a3a"/><polygon points="153.0,41 167.0,41 166.0,78 154.0,78" fill="#c07a90"/><polygon points="154.0,78 166.0,78 165.0,108 155.0,108" fill="#5a2030"/><rect width="172" height="110" fill="#202428" opacity="0.1"/><rect width="172" height="3" fill="#4a4c50"/><rect width="2" height="110" fill="#5a5c60"/></svg></div></div><div class="td" style="left:1050px;width:139px;border-right:none;"><span class="ops" style="padding-left:4px">查看 | 督办 | 删除</span></div></div>
<div class="abs" style="left:1188px;top:48px;width:5px;height:374px;background:#c8c8c8;border-radius:2px"></div>
</div>
<div class="abs" style="left:1281px;top:879px;font-size:17px;letter-spacing:0.6px;color:#555;white-space:nowrap">共 2923 条</div>
<div class="pg" style="left:1389px;"><svg width="34" height="34" style="position:absolute;left:-1px;top:-1px"><path d="M20,11 L14,17 L20,23" fill="none" stroke="#555" stroke-width="1.4"/></svg></div><div class="pg" style="left:1433px;border-color:#4a90e2;color:#4a9af0;">1</div><div class="pg" style="left:1477px;">2</div><div class="pg" style="left:1520px;">3</div><div class="pg" style="left:1564px;">4</div><div class="pg" style="left:1608px;">5</div><div class="pg" style="left:1651px;">6</div><div class="pg" style="left:1695px;">•••</div><div class="pg" style="left:1739px;">293</div><div class="pg" style="left:1782px;"><svg width="34" height="34" style="position:absolute;left:-1px;top:-1px"><path d="M14.5,11 L20.5,17 L14.5,23" fill="none" stroke="#555" stroke-width="1.4"/></svg></div>
</body></html>
